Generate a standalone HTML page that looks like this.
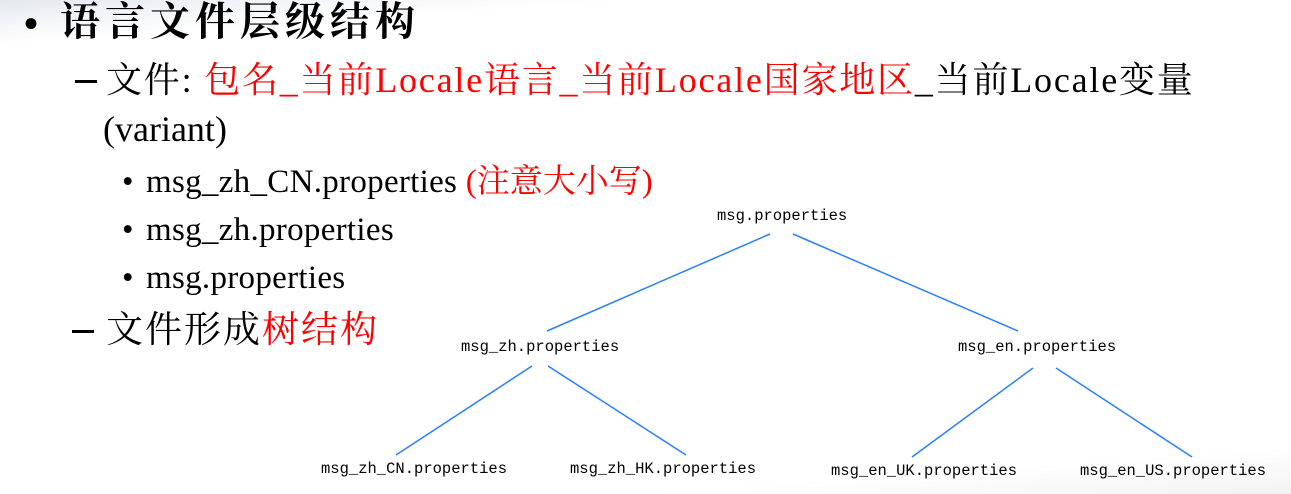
<!DOCTYPE html>
<html><head><meta charset="utf-8"><style>
html,body{margin:0;padding:0}
body{width:1291px;height:494px;position:relative;overflow:hidden;background:#fff;
font-family:"Liberation Serif","Noto Serif CJK SC",serif;color:#000}
.bg{position:absolute;left:0;top:0;width:1291px;height:494px;
background:linear-gradient(176deg,#e4e8ef 0px,#f2f4f8 20px,#fff 45px,#fff 92%,#f3f3f3 100%)}
.t{position:absolute;white-space:nowrap;line-height:1}
.r{color:#f00}
.d{position:absolute;height:3px;background:#000}
.m{position:absolute;font-family:"Liberation Mono",monospace;font-size:15.5px;white-space:nowrap;line-height:1}
</style></head><body>
<div class="bg"></div>
<div class="t" style="left:24px;top:4px;font-size:40px;font-weight:bold">•</div>
<div class="t" style="left:60px;top:2px;font-size:40px;font-weight:bold;letter-spacing:5px">语言文件层级结构</div>
<div class="d" style="left:75px;top:80px;width:22px"></div>
<div class="t" style="left:106px;top:62px;font-size:36px;letter-spacing:1.8px">文件: <span class="r">包名_当前Locale语言_当前Locale国家地区</span>_当前Locale变量</div>
<div class="t" style="left:103px;top:111px;font-size:36px">(variant)</div>
<div class="t" style="left:122px;top:166px;font-size:33px">•</div>
<div class="t" style="left:146px;top:166px;font-size:33px;letter-spacing:0.3px">msg_zh_CN.properties <span class="r" style="letter-spacing:0px">(注意大小写)</span></div>
<div class="t" style="left:122px;top:214px;font-size:33px">•</div>
<div class="t" style="left:146px;top:214px;font-size:33px;letter-spacing:0.3px">msg_zh.properties</div>
<div class="t" style="left:122px;top:262px;font-size:33px">•</div>
<div class="t" style="left:146px;top:262px;font-size:33px;letter-spacing:0.3px">msg.properties</div>
<div class="d" style="left:72px;top:330px;width:22px"></div>
<div class="t" style="left:106px;top:312px;font-size:37px;letter-spacing:2px">文件形成<span class="r">树结构</span></div>
<svg style="position:absolute;left:0;top:0" width="1291" height="494">
<g stroke="#2a7fff" stroke-width="1.5">
<line x1="770" y1="234" x2="547" y2="331"/>
<line x1="793" y1="234" x2="1018" y2="331"/>
<line x1="532" y1="366" x2="396" y2="455"/>
<line x1="548" y1="366" x2="686" y2="455"/>
<line x1="1033" y1="368" x2="912" y2="457"/>
<line x1="1056" y1="368" x2="1192" y2="457"/>
</g></svg>
<div class="m" style="left:717px;top:209px">msg.properties</div>
<div class="m" style="left:461px;top:340px">msg_zh.properties</div>
<div class="m" style="left:958px;top:340px">msg_en.properties</div>
<div class="m" style="left:321px;top:462px">msg_zh_CN.properties</div>
<div class="m" style="left:570px;top:462px">msg_zh_HK.properties</div>
<div class="m" style="left:831px;top:464px">msg_en_UK.properties</div>
<div class="m" style="left:1080px;top:464px">msg_en_US.properties</div>
</body></html>
